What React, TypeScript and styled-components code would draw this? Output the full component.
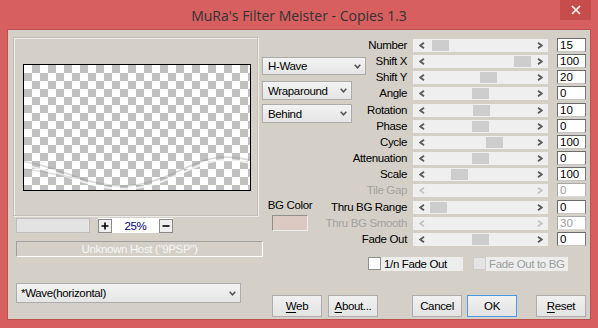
import React from "react";
import styled, { createGlobalStyle } from "styled-components";

const GlobalStyle = createGlobalStyle`
  html, body { margin: 0; padding: 0; background: #d75f5f; }
  body {
    width: 598px; height: 328px; overflow: hidden;
    font-family: "Liberation Sans", Arial, sans-serif;
  }
  * { box-sizing: border-box; }
`;

const Win = styled.div`
  width: 598px;
  height: 328px;
  background: #d75f5f;
  display: flex;
  flex-direction: column;
`;

const TitleBar = styled.div`
  height: 29px;
  display: grid;
  grid-template-columns: 1fr auto 1fr;
  align-items: start;
`;

const Title = styled.div`
  grid-column: 2;
  padding-top: 6px;
  line-height: 20px;
  font-family: "Open Sans", "Noto Sans", sans-serif;
  font-size: 14px;
  color: #333333;
  white-space: nowrap;
`;

const CloseBtn = styled.div`
  grid-column: 3;
  justify-self: end;
  width: 31px;
  height: 20px;
  margin-right: 7px;
  background: #c74c4c;
  display: flex;
  align-items: center;
  justify-content: center;
`;

const Client = styled.div`
  flex: 1;
  margin: 0 7px 8px 7px;
  border: 1px solid #bd5050;
  background: #d4d0c8;
  padding: 7px 4px 0 5px;
  display: flex;
  font-size: 11.5px;
  letter-spacing: -0.35px;
  color: #000;
`;

const LeftCol = styled.div`
  width: 249px;
  flex: 0 0 249px;
  display: flex;
  flex-direction: column;
`;

const PreviewFrame = styled.div`
  width: 245px;
  height: 179px;
  border: 1px solid #c3bfb7;
  box-shadow: inset 1px 1px 0 #eeece8, 1px 1px 0 #eeece8;
  padding: 26px 0 0 9px;
`;

const Checker = styled.div`
  width: 228px;
  height: 127px;
  border: 1px solid #000;
  background: conic-gradient(#c0c0c0 0 25%, #ffffff 0 50%, #c0c0c0 0 75%, #ffffff 0) 0 0 / 16px 16px;
  svg { display: block; }
`;

const ZoomRow = styled.div`
  margin: 2px 0 0 3px;
  height: 15px;
  display: flex;
  gap: 8px;
`;

const GrayBox = styled.div`
  width: 74px;
  height: 15px;
  background: #e3e3e3;
  border: 1px solid #bdbdbd;
`;

const ZoomCtl = styled.div`
  width: 75px;
  height: 15px;
  background: #ffffff;
  display: flex;
  align-items: center;
  justify-content: space-between;
`;

const ZoomBtn = styled.div`
  width: 14px;
  height: 14px;
  border: 1px solid #8a8a8a;
  background: #efefef;
  display: flex;
  align-items: center;
  justify-content: center;
`;

const ZoomPct = styled.span`
  color: #000080;
  line-height: 14px;
`;

const HostBox = styled.div`
  margin: 8px 0 0 3px;
  width: 247px;
  height: 16px;
  border-style: solid;
  border-width: 1px;
  border-color: #a0a0a0 #ffffff #ffffff #a0a0a0;
  color: #f6f6f6;
  text-align: center;
  line-height: 14px;
  white-space: nowrap;
`;

const Select = styled.div<{ $w: number; $h: number; $mt: number; $ml?: number; $pl?: number }>`
  width: ${(p) => p.$w}px;
  height: ${(p) => p.$h}px;
  margin-top: ${(p) => p.$mt}px;
  margin-left: ${(p) => p.$ml ?? 0}px;
  border: 1px solid #acacac;
  background: linear-gradient(#f3f3f3, #e5e5e5);
  display: flex;
  align-items: center;
  justify-content: space-between;
  padding: 0 4px 0 ${(p) => p.$pl ?? 5}px;
  white-space: nowrap;
`;

const RightCol = styled.div`
  flex: 1;
  min-width: 0;
  display: flex;
  flex-direction: column;
`;

const TopArea = styled.div`
  display: flex;
  align-items: flex-start;
`;

const SideCol = styled.div`
  width: 104px;
  flex: 0 0 104px;
  display: flex;
  flex-direction: column;
`;

const BgBlock = styled.div`
  margin: 75px 0 0 6px;
  width: 44px;
  display: flex;
  flex-direction: column;
  align-items: center;
  gap: 3px;
`;

const BgLabel = styled.div`
  line-height: 14px;
  white-space: nowrap;
`;

const Swatch = styled.div`
  width: 36px;
  height: 16px;
  background: #dcc9c1;
  border: 1px solid;
  border-color: #8f8f8f #ececec #ececec #8f8f8f;
`;

const Rows = styled.div`
  margin-top: 1px;
  display: flex;
  flex-direction: column;
  gap: 2.1667px;
`;

const Row = styled.div`
  height: 14px;
  display: flex;
  align-items: center;
`;

const Label = styled.div<{ $dis?: boolean }>`
  flex: 0 0 41px;
  min-width: 0;
  display: flex;
  justify-content: flex-end;
  white-space: nowrap;
  line-height: 14px;
  color: ${(p) => (p.$dis ? "#a3a3a3" : "#000")};
`;

const Slider = styled.div`
  flex: 0 0 135px;
  height: 13px;
  margin-left: 6px;
  align-self: flex-end;
  background: #efefef;
  display: flex;
`;

const ArrowBtn = styled.div`
  flex: 0 0 17px;
  display: flex;
  align-items: center;
  justify-content: center;
`;

const Track = styled.div`
  flex: 1;
  display: flex;
  align-items: center;
`;

const Thumb = styled.div<{ $pos: number }>`
  width: 17px;
  height: 11px;
  margin-left: ${(p) => p.$pos}px;
  background: #cdcdcd;
`;

const ValueBox = styled.div<{ $dis?: boolean }>`
  flex: 0 0 29px;
  height: 14px;
  margin-left: 9px;
  background: #ffffff;
  border: 1px solid;
  border-color: ${(p) =>
    p.$dis ? "#a9a9a9 #b0b0b0 #dcdcdc #a9a9a9" : "#6c6c6c #787878 #c4c4c4 #6c6c6c"};
  font-size: 11.5px;
  letter-spacing: 0;
  line-height: 12px;
  padding-left: 2px;
  color: ${(p) => (p.$dis ? "#a0a0a0" : "#000")};
`;

const CheckRow = styled.div`
  margin: 11px 0 0 106px;
  display: flex;
  height: 14px;
`;

const CheckItem = styled.div<{ $ml?: number }>`
  display: flex;
  align-items: center;
  margin-left: ${(p) => p.$ml ?? 0}px;
`;

const CheckBox = styled.div<{ $dis?: boolean }>`
  width: 13px;
  height: 13px;
  background: ${(p) => (p.$dis ? "#e4e4e4" : "#ffffff")};
  border: 1px solid ${(p) => (p.$dis ? "#cccccc" : "#8e8f8f")};
`;

const CheckLabel = styled.div<{ $dis?: boolean; $w: number }>`
  width: ${(p) => p.$w}px;
  height: 14px;
  line-height: 14px;
  padding-left: 3px;
  background: #ededed;
  white-space: nowrap;
  color: ${(p) => (p.$dis ? "#9d9d9d" : "#000")};
`;

const ButtonRow = styled.div`
  margin-top: 24px;
  display: flex;
`;

const Button = styled.div<{ $ml: number; $def?: boolean }>`
  width: 50px;
  height: 22px;
  margin-left: ${(p) => p.$ml}px;
  border: 1px solid ${(p) => (p.$def ? "#4a98e6" : "#adadad")};
  background: linear-gradient(#f1f1f1, #e3e3e3);
  display: flex;
  align-items: center;
  justify-content: center;
  white-space: nowrap;
  u { text-decoration: underline; text-underline-offset: 2px; }
`;

const Chevron = () => (
  <svg width="7" height="5" viewBox="0 0 7 5">
    <polyline points="0.7,0.8 3.5,3.8 6.3,0.8" fill="none" stroke="#555" strokeWidth="1.6" />
  </svg>
);

const Arrow = ({ dir, dis }: { dir: "l" | "r"; dis?: boolean }) => (
  <svg width="6" height="7" viewBox="0 0 6 7">
    <polyline
      points={dir === "l" ? "5,0.8 1.3,3.5 5,6.2" : "1,0.8 4.7,3.5 1,6.2"}
      fill="none"
      stroke={dis ? "#c4c4c4" : "#5a5a5a"}
      strokeWidth="1.8"
    />
  </svg>
);

type Param = { label: string; value: string; pos?: number; disabled?: boolean };

const params: Param[] = [
  { label: "Number", value: "15", pos: 2 },
  { label: "Shift X", value: "100", pos: 84 },
  { label: "Shift Y", value: "20", pos: 50 },
  { label: "Angle", value: "0", pos: 42 },
  { label: "Rotation", value: "10", pos: 43 },
  { label: "Phase", value: "0", pos: 42 },
  { label: "Cycle", value: "100", pos: 56 },
  { label: "Attenuation", value: "0", pos: 42 },
  { label: "Scale", value: "100", pos: 21 },
  { label: "Tile Gap", value: "0", disabled: true },
  { label: "Thru BG Range", value: "0", pos: 0 },
  { label: "Thru BG Smooth", value: "30", disabled: true },
  { label: "Fade Out", value: "0", pos: 42 },
];

export default function App() {
  return (
    <>
      <GlobalStyle />
      <Win>
        <TitleBar>
          <Title>MuRa's Filter Meister - Copies 1.3</Title>
          <CloseBtn>
            <svg width="10" height="10" viewBox="0 0 10 10">
              <path d="M1 1 L9 9 M9 1 L1 9" stroke="#fff" strokeWidth="1.6" />
            </svg>
          </CloseBtn>
        </TitleBar>
        <Client>
          <LeftCol>
            <PreviewFrame>
              <Checker>
                <svg width="226" height="125" viewBox="0 0 226 125">
                  <path
                    d="M0,97 C30,99 60,121 98,121 C140,121 170,92 200,92 C212,92 220,94 226,95"
                    fill="none"
                    stroke="rgba(140,140,140,0.35)"
                    strokeWidth="1.6"
                  />
                  <path
                    d="M0,101 C35,104 62,124 100,124 C142,124 168,96 200,95 C212,95 220,97 226,98"
                    fill="none"
                    stroke="rgba(255,255,255,0.75)"
                    strokeWidth="2"
                  />
                  <path
                    d="M0,104 C20,106 40,112 60,114"
                    fill="none"
                    stroke="rgba(150,150,150,0.3)"
                    strokeWidth="1.4"
                  />
                </svg>
              </Checker>
            </PreviewFrame>
            <ZoomRow>
              <GrayBox />
              <ZoomCtl>
                <ZoomBtn>
                  <svg width="8" height="8" viewBox="0 0 8 8">
                    <path d="M4 0.5 V7.5 M0.5 4 H7.5" stroke="#000" strokeWidth="1.6" />
                  </svg>
                </ZoomBtn>
                <ZoomPct>25%</ZoomPct>
                <ZoomBtn>
                  <svg width="8" height="8" viewBox="0 0 8 8">
                    <path d="M0.5 4 H7.5" stroke="#000" strokeWidth="1.6" />
                  </svg>
                </ZoomBtn>
              </ZoomCtl>
            </ZoomRow>
            <HostBox>Unknown Host ("9PSP")</HostBox>
            <Select $w={225} $h={20} $mt={26} $ml={3} $pl={4}>
              <span>*Wave(horizontal)</span>
              <Chevron />
            </Select>
          </LeftCol>
          <RightCol>
            <TopArea>
              <SideCol>
                <Select $w={104} $h={18} $mt={20}>
                  <span>H-Wave</span>
                  <Chevron />
                </Select>
                <Select $w={90} $h={19} $mt={6}>
                  <span>Wraparound</span>
                  <Chevron />
                </Select>
                <Select $w={90} $h={19} $mt={4}>
                  <span>Behind</span>
                  <Chevron />
                </Select>
                <BgBlock>
                  <BgLabel>BG Color</BgLabel>
                  <Swatch />
                </BgBlock>
              </SideCol>
              <Rows>
                {params.map((p) => (
                  <Row key={p.label}>
                    <Label $dis={p.disabled}>{p.label}</Label>
                    <Slider>
                      <ArrowBtn>
                        <Arrow dir="l" dis={p.disabled} />
                      </ArrowBtn>
                      <Track>{!p.disabled && <Thumb $pos={p.pos ?? 0} />}</Track>
                      <ArrowBtn>
                        <Arrow dir="r" dis={p.disabled} />
                      </ArrowBtn>
                    </Slider>
                    <ValueBox $dis={p.disabled}>{p.value}</ValueBox>
                  </Row>
                ))}
              </Rows>
            </TopArea>
            <CheckRow>
              <CheckItem>
                <CheckBox />
                <CheckLabel $w={82}>1/n Fade Out</CheckLabel>
              </CheckItem>
              <CheckItem $ml={10}>
                <CheckBox $dis />
                <CheckLabel $dis $w={82}>Fade Out to BG</CheckLabel>
              </CheckItem>
            </CheckRow>
            <ButtonRow>
              <Button $ml={10}>
                <span><u>W</u>eb</span>
              </Button>
              <Button $ml={6}>
                <span><u>A</u>bout...</span>
              </Button>
              <Button $ml={34}>Cancel</Button>
              <Button $ml={5} $def>OK</Button>
              <Button $ml={19}>
                <span><u>R</u>eset</span>
              </Button>
            </ButtonRow>
          </RightCol>
        </Client>
      </Win>
    </>
  );
}
